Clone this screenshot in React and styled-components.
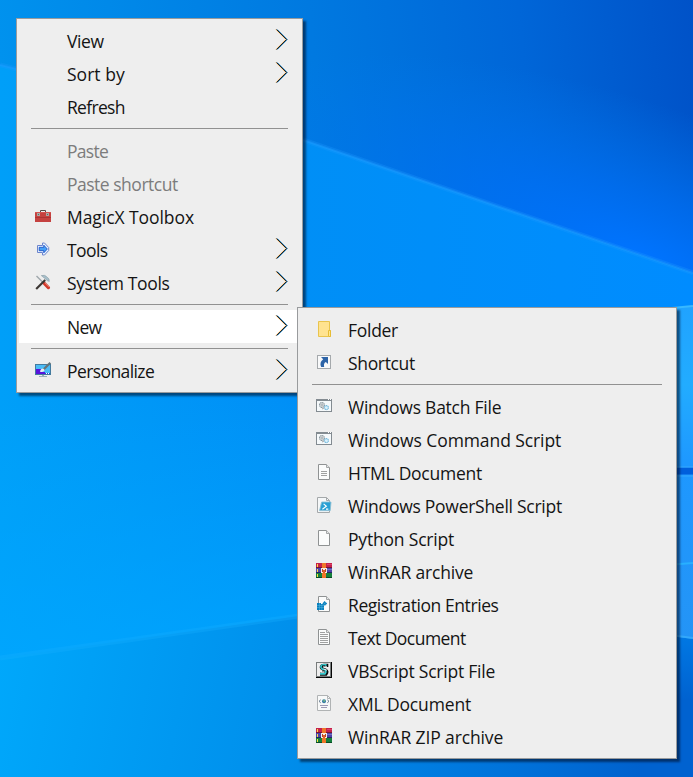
import React from "react";
import styled, { createGlobalStyle, css } from "styled-components";

const GlobalStyle = createGlobalStyle`
  *, *::before, *::after { box-sizing: border-box; }
  html, body { margin: 0; padding: 0; overflow: hidden; }
`;

const Desktop = styled.main`
  position: relative;
  width: 693px;
  height: 777px;
  overflow: hidden;
  font-family: "Open Sans", "Noto Sans", sans-serif;
`;

const WallpaperArt = styled.svg`
  display: block;
  width: 693px;
  height: 777px;
`;

const Menu = styled.ul`
  position: absolute;
  margin: 0;
  padding: 5px 2px;
  list-style: none;
  background: #eeeeee;
  border: 1px solid #999b9d;
  box-shadow: 3px 3px 2px rgba(0, 10, 30, 0.55);
`;

const DesktopMenu = styled(Menu)`
  left: 16px;
  top: 18px;
  width: 287px;
`;

const NewSubmenu = styled(Menu)`
  left: 297px;
  top: 307px;
  width: 380px;
`;

const MenuItem = styled.li`
  display: flex;
  align-items: flex-start;
  height: 33px;
  padding: 4px 12px 0 16px;
  color: ${(p) => (p.$disabled ? "#7c7c7c" : "#141414")};
  ${(p) =>
    p.$active &&
    css`
      background: #ffffff;
    `}
`;

const IconSlot = styled.span`
  flex: none;
  width: 32px;
  height: 16px;
  margin-top: 4px;
`;

const Icon = styled.svg`
  display: block;
  width: 16px;
  height: 16px;
  overflow: visible;
`;

const Label = styled.span`
  flex: 1;
  font-size: 17.5px;
  line-height: 26px;
  white-space: nowrap;
  letter-spacing: ${(p) => p.$spacing}px;
`;

const ChevronIcon = styled.svg`
  flex: none;
  width: 14px;
  height: 22px;
  margin-top: 1px;
`;

const Separator = styled.li`
  height: 1px;
  margin: 5px 12px;
  background: #919191;
`;

function Wallpaper() {
  return (
    <WallpaperArt viewBox="0 0 693 777" aria-hidden="true">
      <defs>
        <linearGradient id="base" x1="0" y1="0" x2="693" y2="0" gradientUnits="userSpaceOnUse">
          <stop offset="0" stopColor="#009ff8" />
          <stop offset="0.43" stopColor="#008ff6" />
          <stop offset="1" stopColor="#008cff" />
        </linearGradient>
        <linearGradient id="sky" x1="0" y1="60" x2="693" y2="0" gradientUnits="userSpaceOnUse">
          <stop offset="0" stopColor="#0092ee" />
          <stop offset="0.45" stopColor="#0079e0" />
          <stop offset="0.75" stopColor="#0066d8" />
          <stop offset="1" stopColor="#0052c8" />
        </linearGradient>
        <radialGradient id="glow" cx="0" cy="0" r="1" gradientUnits="userSpaceOnUse" gradientTransform="translate(640 255) rotate(19) scale(440 150)">
          <stop offset="0" stopColor="#0074ff" />
          <stop offset="0.4" stopColor="#0072f6" stopOpacity="0.7" />
          <stop offset="1" stopColor="#0078ec" stopOpacity="0" />
        </radialGradient>
        <linearGradient id="floor" x1="0" y1="640" x2="693" y2="777" gradientUnits="userSpaceOnUse">
          <stop offset="0" stopColor="#00a8fb" />
          <stop offset="0.4" stopColor="#0090ec" />
          <stop offset="0.75" stopColor="#0072da" />
          <stop offset="1" stopColor="#005ac8" />
        </linearGradient>
        <linearGradient id="left" x1="0" y1="400" x2="0" y2="660" gradientUnits="userSpaceOnUse">
          <stop offset="0" stopColor="#00a8ff" stopOpacity="0" />
          <stop offset="1" stopColor="#00a8ff" stopOpacity="0.7" />
        </linearGradient>
        <linearGradient id="pane" x1="0" y1="300" x2="0" y2="640" gradientUnits="userSpaceOnUse">
          <stop offset="0" stopColor="#20a2ff" />
          <stop offset="0.25" stopColor="#22acff" />
          <stop offset="0.48" stopColor="#1e98ff" />
          <stop offset="1" stopColor="#2494f6" />
        </linearGradient>
        <linearGradient id="corner" x1="0" y1="636" x2="0" y2="700" gradientUnits="userSpaceOnUse">
          <stop offset="0" stopColor="#0078e4" />
          <stop offset="1" stopColor="#0062d0" />
        </linearGradient>
      </defs>
      <rect width="693" height="777" fill="url(#base)" />
      <path d="M0 0H693V273Q500 207 303 140L0 65Z" fill="url(#sky)" />
      <path d="M0 0H693V273Q500 207 303 140L0 65Z" fill="url(#glow)" />
      <path d="M0 65L303 140Q500 207 693 273" fill="none" stroke="#1c9bff" strokeOpacity="0.28" strokeWidth="5" />
      <path d="M0 65L303 140Q500 207 693 273" fill="none" stroke="#1c9bff" strokeOpacity="0.5" strokeWidth="2" />
      <path d="M0 400H400V605L0 658Z" fill="url(#left)" />
      <path d="M0 658L320 613L693 580V777H0Z" fill="url(#floor)" />
      <path d="M0 658L320 613" stroke="#18b0ff" strokeOpacity="0.3" strokeWidth="5" />
      <path d="M640 312L693 306V640L640 632Z" fill="url(#pane)" />
      <path d="M640 311L693 306" stroke="#38b8ff" strokeWidth="2" />
      <path d="M640 471H693" stroke="#005fdc" strokeWidth="7" />
      <path d="M640 467H693M640 476H693" stroke="#35a8ff" strokeWidth="1" />
      <path d="M640 567L693 563" stroke="#28b0ff" strokeWidth="2" />
      <path d="M640 632L693 639V777H640Z" fill="url(#corner)" />
      <path d="M640 631L693 638" stroke="#33a8fb" strokeWidth="2" />
    </WallpaperArt>
  );
}

function Chevron() {
  return (
    <ChevronIcon viewBox="0 0 14 22" fill="none" aria-hidden="true">
      <path d="M1.9 .5L11.9 10.5L1.9 20.5" stroke="#ffb458" strokeWidth="0.9" />
      <path d="M3.3 .5L13.3 10.5L3.3 20.5" stroke="#1689d6" strokeWidth="0.9" />
      <path d="M2.6 .5L12.6 10.5L2.6 20.5" stroke="#080808" strokeWidth="0.95" />
    </ChevronIcon>
  );
}

function Toolbox() {
  return (
    <Icon viewBox="0 0 16 16">
      <path d="M5.5 4V2.5H10.5V4" fill="none" stroke="#574a45" />
      <rect y="4" width="16" height="10" fill="#c54240" />
      <path d="M0 9H16V10H0Z" fill="#ac3434" />
      <path d="M0 4H16V5H0Z" fill="#d65450" />
      <path d="M2 5H5V8H2ZM11 5H14V8H11Z" fill="#a9a7a4" />
      <path d="M3 6H4V7H3ZM12 6H13V7H12Z" fill="#5d6868" />
    </Icon>
  );
}

function BlueArrow() {
  return (
    <Icon viewBox="0 0 16 16">
      <path d="M2.5 4.5H7.5V2H9.5L13.7 6.5V9.5L9.5 14H7.5V11.5H2.5Z" fill="#e8f2ff" stroke="#6c84cc" />
      <path d="M4.2 6.3H8.8V4.2L12.3 8L8.8 11.8V9.7H4.2Z" fill="#45a0f6" stroke="#1d55c6" strokeWidth=".9" />
    </Icon>
  );
}

function HammerScrewdriver() {
  return (
    <Icon viewBox="0 0 16 16">
      <path d="M1.5 2L8.5 9" stroke="#a0a8ac" strokeWidth="1.4" />
      <path d="M9 9.2L13.4 13.6" stroke="#d23a2c" strokeWidth="3.3" strokeLinecap="round" />
      <path d="M9.8 8.8L14 12.9" stroke="#f08a78" strokeWidth=".8" />
      <path d="M1.2 15L10.2 6" stroke="#3b3633" strokeWidth="2.1" />
      <path d="M6.3 1.6Q10 .6 11.5 2.6L14 4.9L14.3 7.4L12.5 6.8L9.5 4.2L6.3 1.6Z" fill="#a6bfca" stroke="#7d909a" strokeWidth=".5" />
    </Icon>
  );
}

function PersonalizeMonitor() {
  return (
    <Icon viewBox="0 0 16 16">
      <rect x=".5" y="2.5" width="15" height="10" fill="#4bbcf7" stroke="#437a9d" />
      <path d="M1 7H6V10H10V12H1Z" fill="#5713dc" />
      <path d="M10 11H15V12H10Z" fill="#2450d8" />
      <path d="M11 11H12V12H11ZM13 11H14V12H13Z" fill="#fff" />
      <path d="M7 13H9V14H12V15H4V14H7Z" fill="#9aafbb" />
      <path d="M8.5 7.5L15.3 .7" stroke="#66747a" strokeWidth="2.3" />
      <path d="M5 9.8Q5.5 6.5 8.2 6.5L9.7 8Q8.5 10.8 5 9.8Z" fill="#e7eef0" />
    </Icon>
  );
}

function FolderIcon() {
  return (
    <Icon viewBox="0 0 16 16">
      <path d="M2.5 .5H13.5V9.5H14.5V15.5H2.5Z" fill="#ffe390" stroke="#e9c44d" />
      <path d="M12.5 15V9.5H14.5V15.5H12.5" fill="#ffe892" stroke="#e7bc35" />
    </Icon>
  );
}

function ShortcutIcon() {
  return (
    <Icon viewBox="0 0 16 16">
      <rect x="1.5" y="1.5" width="13" height="13" fill="#f8f9fa" stroke="#a5a9ac" />
      <path d="M5 3H12V10L9.8 7.9Q7.2 9.3 8.2 13H5.2Q3 8.3 7.2 5.2Z" fill="#2d64a7" />
    </Icon>
  );
}

function ScriptWindow() {
  return (
    <Icon viewBox="0 0 16 16">
      <rect x=".5" y="1.5" width="15" height="12" fill="#f5f9fb" stroke="#838b91" />
      <path d="M0 1H16V3H0Z" fill="#838b91" />
      <path d="M12 1H13V2H12ZM14 1H15V2H14Z" fill="#fff" />
      <circle cx="6" cy="7" r="2.4" fill="#e6e9ea" stroke="#8a969d" strokeWidth="1.2" strokeDasharray="1.3 .4" />
      <circle cx="6" cy="7" r=".8" fill="#fff" stroke="#818c93" strokeWidth=".6" />
      <circle cx="10.4" cy="9.6" r="2" fill="#d9f0fc" stroke="#70b6d9" strokeWidth="1.1" strokeDasharray="1.2 .4" />
      <path d="M6 11L8 10" stroke="#a3a3a3" />
    </Icon>
  );
}

function PageIcon({ children }) {
  return (
    <Icon viewBox="0 0 16 16">
      <path d="M2.5 .5H10.5L13.5 3.5V15.5H2.5Z" fill="#fbfcfc" stroke="#8f9293" />
      <path d="M10.5 .5V3.5H13.5" fill="#e5e7e7" stroke="#a5a7a8" />
      {children}
    </Icon>
  );
}

const HtmlPage = () => (
  <PageIcon>
    <path d="M5 7.5H11M5 9.5H11M5 11.5H11" stroke="#a0a1a1" />
  </PageIcon>
);

const TextPage = () => (
  <PageIcon>
    <path d="M4 3.5H9M4 5.5H12M4 7.5H12M4 9.5H12M4 11.5H12M4 13.5H12" stroke="#a0a1a1" />
  </PageIcon>
);

function PowerShellPage() {
  return (
    <Icon viewBox="0 0 16 16">
      <path d="M1.5 .5H10.5L13.5 3.5V15.5H1.5Z" fill="#f5f7f8" stroke="#a4a8aa" />
      <path d="M10.5 .5V3.5H13.5" fill="none" stroke="#a4a8aa" />
      <path d="M5.6 5H15L14.2 13.6H3.6Z" fill="#27a0d4" stroke="#8cbfd4" strokeWidth=".9" />
      <path d="M7.6 6.8L10.4 9.3L6.4 12.2M10 12.1H12.3" fill="none" stroke="#fff" strokeWidth="1.1" />
    </Icon>
  );
}

function RarBooks() {
  return (
    <Icon viewBox="0 0 16 16" shapeRendering="crispEdges">
      <path d="M0 0H16V5H0Z" fill="#c4204b" />
      <path d="M0 5H16V10H0Z" fill="#4d43a9" />
      <path d="M0 10H16V15H0Z" fill="#15803c" />
      <path d="M0 4H16V5H0Z" fill="#79152f" />
      <path d="M0 9H16V10H0Z" fill="#252463" />
      <path d="M0 14H16V15H0Z" fill="#084c25" />
      <path d="M1 1H2V4H1ZM1 6H2V9H1ZM1 11H2V14H1Z" fill="#ffdc42" />
      <path d="M11 1H16V2H11Z" fill="#dd4265" />
      <path d="M11 6H16V7H11Z" fill="#7170c2" />
      <path d="M6 0H10V15H6Z" fill="#ef7729" />
      <path d="M5 5H11V10H5Z" fill="#f7ede3" />
      <path d="M6 6H7V9H6ZM9 6H10V9H9Z" fill="#b84224" />
      <path d="M7 7H9V10H7Z" fill="#e0602c" />
    </Icon>
  );
}

function RegistryPage() {
  return (
    <PageIcon>
      <path d="M1 7H5V8H8V14H1Z" fill="#087fbd" />
      <path d="M1 9.5H8M1 11.5H8M3.5 7V14M5.8 8V14" stroke="#56b6df" strokeWidth=".5" />
      <path d="M8.5 5L11.2 7.4L8.9 9.8L6.4 7.4Z" fill="#087fbd" />
      <path d="M7.3 6.3L10.2 8.8M9.9 6.1L7.4 9" stroke="#63b9dd" strokeWidth=".4" />
    </PageIcon>
  );
}

function VbScriptIcon() {
  return (
    <Icon viewBox="0 0 16 16">
      <path d="M0 0H16V16H0Z" fill="#060606" />
      <path d="M0 0H15V15H0Z" fill="#777b7b" />
      <path d="M1 1H14V14H1Z" fill="#eeeeee" />
      <path d="M12.3 3.4H8Q5 3.4 5.3 5.5Q6 7.2 9.5 8Q12 9.5 10 12.1H4" fill="none" stroke="#080c0c" strokeWidth="3.2" />
      <path d="M10.6 2.9H7.4Q4.6 3.1 5 5.2Q5.4 7 8.5 8Q11 9.5 9 11.8H4" fill="none" stroke="#37cbd0" strokeWidth="1.7" />
      <path d="M7 4.8H11M7.5 6.8L11 8.3M4.5 10H8" stroke="#f4ffff" />
      <path d="M6 3.8H9M6 9H9" stroke="#071112" strokeWidth=".8" />
    </Icon>
  );
}

function XmlPage() {
  return (
    <Icon viewBox="0 0 16 16">
      <path d="M1.5 .5H11.5L14.5 3.5V15.5H1.5Z" fill="#f8f9f9" stroke="#b0b3b4" />
      <path d="M11.5 .5V3.5H14.5" fill="none" stroke="#b0b3b4" />
      <path d="M4.7 4.8L3 6.3L4.7 7.8M11.3 4.8L13 6.3L11.3 7.8" fill="none" stroke="#697d91" />
      <circle cx="8" cy="6.3" r="2" fill="#397da9" />
      <path d="M7.2 5L8.6 5.5L8 6.8" stroke="#7fc66e" fill="none" />
      <path d="M4 10.5H12M5 12.5H11" stroke="#9d99b5" />
    </Icon>
  );
}

const desktopItems = [
  { label: "View", spacing: -0.4, submenu: true },
  { label: "Sort by", spacing: 0.02, submenu: true },
  { label: "Refresh", spacing: -0.68 },
  { separator: true },
  { label: "Paste", spacing: -0.72, disabled: true },
  { label: "Paste shortcut", spacing: -0.49, disabled: true },
  { label: "MagicX Toolbox", spacing: -0.06, icon: Toolbox },
  { label: "Tools", spacing: -0.6, icon: BlueArrow, submenu: true },
  { label: "System Tools", spacing: -0.38, icon: HammerScrewdriver, submenu: true },
  { separator: true },
  { label: "New", spacing: -0.7, submenu: true, active: true },
  { separator: true },
  { label: "Personalize", spacing: -0.59, icon: PersonalizeMonitor, submenu: true },
];

const newItems = [
  { label: "Folder", spacing: -0.28, icon: FolderIcon },
  { label: "Shortcut", spacing: -0.34, icon: ShortcutIcon },
  { separator: true },
  { label: "Windows Batch File", spacing: -0.24, icon: ScriptWindow },
  { label: "Windows Command Script", spacing: -0.09, icon: ScriptWindow },
  { label: "HTML Document", spacing: -0.26, icon: HtmlPage },
  { label: "Windows PowerShell Script", spacing: -0.27, icon: PowerShellPage },
  { label: "Python Script", spacing: -0.19, icon: PageIcon },
  { label: "WinRAR archive", spacing: -0.16, icon: RarBooks },
  { label: "Registration Entries", spacing: -0.42, icon: RegistryPage },
  { label: "Text Document", spacing: -0.54, icon: TextPage },
  { label: "VBScript Script File", spacing: -0.22, icon: VbScriptIcon },
  { label: "XML Document", spacing: -0.15, icon: XmlPage },
  { label: "WinRAR ZIP archive", spacing: -0.13, icon: RarBooks },
];

function MenuEntries({ items }) {
  return items.map((item, index) => {
    if (item.separator) return <Separator key={index} role="separator" />;
    const Glyph = item.icon;
    return (
      <MenuItem key={item.label} role="menuitem" $active={item.active} $disabled={item.disabled}>
        <IconSlot>{Glyph && <Glyph />}</IconSlot>
        <Label $spacing={item.spacing}>{item.label}</Label>
        {item.submenu && <Chevron />}
      </MenuItem>
    );
  });
}

export default function App() {
  return (
    <Desktop>
      <GlobalStyle />
      <Wallpaper />
      <DesktopMenu role="menu">
        <MenuEntries items={desktopItems} />
      </DesktopMenu>
      <NewSubmenu role="menu">
        <MenuEntries items={newItems} />
      </NewSubmenu>
    </Desktop>
  );
}
